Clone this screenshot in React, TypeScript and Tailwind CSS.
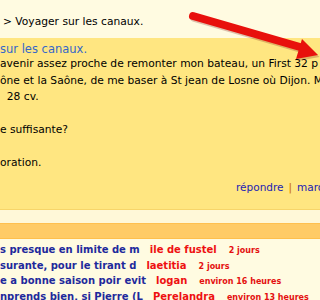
export default function App() {
    const body = [
        "avenir assez proche de remonter mon bateau, un First 32 p",
        "ône et la Saône, de me baser à St jean de Losne où Dijon. M",
        "\u00a0\u00a028 cv.",
        "\u00a0",
        "e suffisante?",
        "\u00a0",
        "oration.",
    ];

    const rows = [
        { title: "s presque en limite de m", name: "ile de fustel", time: "2 jours" },
        { title: "surante, pour le tirant d", name: "laetitia", time: "2 jours" },
        { title: "e a bonne saison poir evit", name: "logan", time: "environ 16 heures" },
        { title: "nprends bien, si Pierre (L", name: "Perelandra", time: "environ 13 heures" },
    ];

    return (
        <div className="relative w-[320px] h-[300px] overflow-hidden bg-[#fffbe1] whitespace-nowrap font-['DejaVu_Sans',sans-serif]">
            <div className="h-[38px] pt-[14px] pl-[3px] text-[10.7px] leading-[16px] text-black">
                &gt; Voyager sur les canaux.
            </div>

            <div className="h-[171px] bg-[#ffe681] pt-[5px] text-[10.7px]">
                <div className="leading-[13px] text-[11.5px] text-[#3566c8]">sur les canaux.</div>
                {body.map((line, i) => (
                    <div key={i} className="leading-[16.5px] text-black">
                        {line}
                    </div>
                ))}
                <div className="mt-[7px] pl-[236px] leading-[16px] text-[10.5px]">
                    <span className="text-[#1d1db4]">répondre</span>
                    <span className="mx-[5px] text-[#c86a00]">|</span>
                    <span className="text-[#1d1db4]">marquer</span>
                </div>
            </div>

            <div className="h-px bg-[#f7d56a]" />
            <div className="h-[13px] bg-[#fff8d8]" />
            <div className="h-px bg-[#ffc04f]" />
            <div className="h-[14px] bg-[#ffcb66]" />
            <div className="h-px bg-[#ffbf4c]" />

            <div className="pt-[4px]">
                {rows.map(r => (
                    <div key={r.name} className="flex items-baseline leading-[14.5px] font-bold">
                        <span className="text-[10px] text-[#1e2a9c]">{r.title}</span>
                        <span className="ml-[10px] text-[10px] text-[#ee1111]">{r.name}</span>
                        <span className="ml-[12px] text-[8px] text-[#e41010]">{r.time}</span>
                    </div>
                ))}
            </div>

            <svg
                className="absolute left-0 top-0 pointer-events-none"
                width="320"
                height="80"
                viewBox="0 0 320 80"
            >
                <g transform="translate(1.5 2)" fill="#7a1a10" opacity="0.25">
                    <line x1="193" y1="16" x2="300" y2="47" stroke="#7a1a10" strokeWidth="8" strokeLinecap="round" />
                    <polygon points="318,55 302,39 296,59" />
                </g>
                <line x1="193" y1="16" x2="300" y2="47" stroke="#e8100c" strokeWidth="8" strokeLinecap="round" />
                <polygon points="318,55 302,39 296,59" fill="#e8100c" />
            </svg>
        </div>
    );
}
